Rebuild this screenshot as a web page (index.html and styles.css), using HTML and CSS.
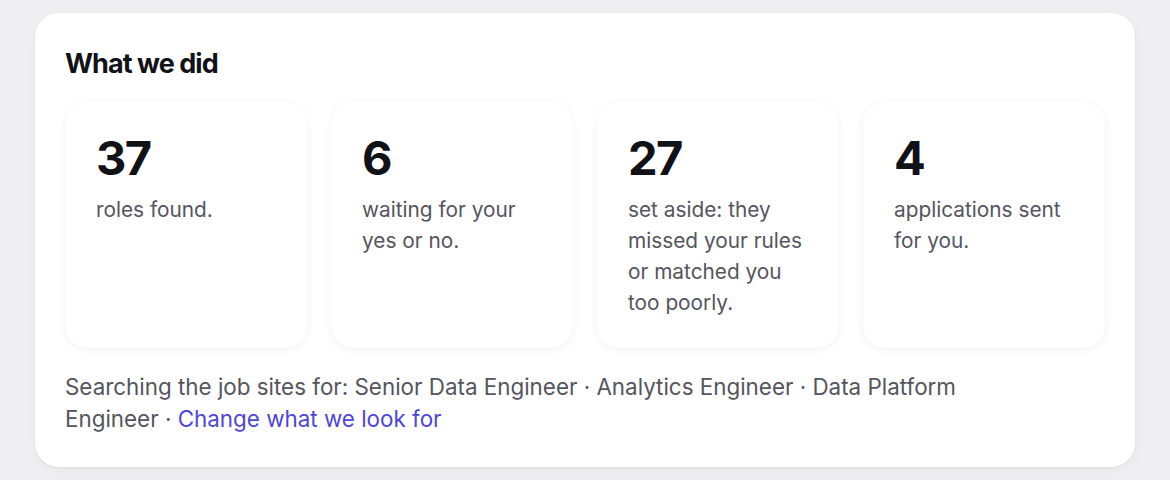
FILE: index.html
```html
<!DOCTYPE html>
<html lang="en">
<head>
<meta charset="utf-8">
<title>What we did</title>
<link rel="stylesheet" href="styles.css">
</head>
<body>
  <section class="panel">
    <h2 class="panel-title">What we did</h2>
    <div class="stats">
      <div class="stat">
        <div class="stat-num">37</div>
        <p class="stat-label">roles found.</p>
      </div>
      <div class="stat">
        <div class="stat-num">6</div>
        <p class="stat-label">waiting for your yes or no.</p>
      </div>
      <div class="stat">
        <div class="stat-num">27</div>
        <p class="stat-label">set aside: they missed your rules or matched you too poorly.</p>
      </div>
      <div class="stat">
        <div class="stat-num">4</div>
        <p class="stat-label">applications sent for you.</p>
      </div>
    </div>
    <p class="search-note">Searching the job sites for: Senior Data Engineer · Analytics Engineer · Data Platform Engineer · <a class="link" href="#">Change what we look for</a></p>
  </section>
</body>
</html>
```

FILE: styles.css
```css
* { box-sizing: border-box; }

html, body {
  margin: 0;
  background: #efeff1;
}

body {
  padding: 13px 35px 14px;
  font-family: Inter, "Noto Sans", "Liberation Sans", sans-serif;
  color: #111118;
}

.panel {
  background: #ffffff;
  border-radius: 24px;
  padding: 34px 30px 32px;
  box-shadow: 0 1px 3px rgba(0, 0, 0, 0.05), 0 4px 14px rgba(0, 0, 0, 0.03);
}

.panel-title {
  margin: 0 0 22px;
  font-size: 27px;
  line-height: 33px;
  font-weight: 700;
  letter-spacing: -0.035em;
  color: #111118;
}

.stats {
  display: grid;
  grid-template-columns: repeat(4, 1fr);
  gap: 24px;
}

.stat {
  height: 246px;
  background: #ffffff;
  border-radius: 22px;
  padding: 29px 31px;
  box-shadow: 0 2px 10px rgba(0, 0, 0, 0.05), 0 0 2px rgba(0, 0, 0, 0.03);
}

.stat-num {
  font-size: 47px;
  line-height: 54px;
  font-weight: 700;
  letter-spacing: -0.035em;
  color: #111118;
}

.stat-label {
  margin: 9px 0 0;
  font-size: 20.8px;
  line-height: 31px;
  color: #55555e;
}

.search-note {
  max-width: 940px;
  margin: 23px 0 0;
  font-size: 22.4px;
  line-height: 32px;
  color: #55555e;
}

.link {
  color: #4f46d8;
  text-decoration: none;
}
```
